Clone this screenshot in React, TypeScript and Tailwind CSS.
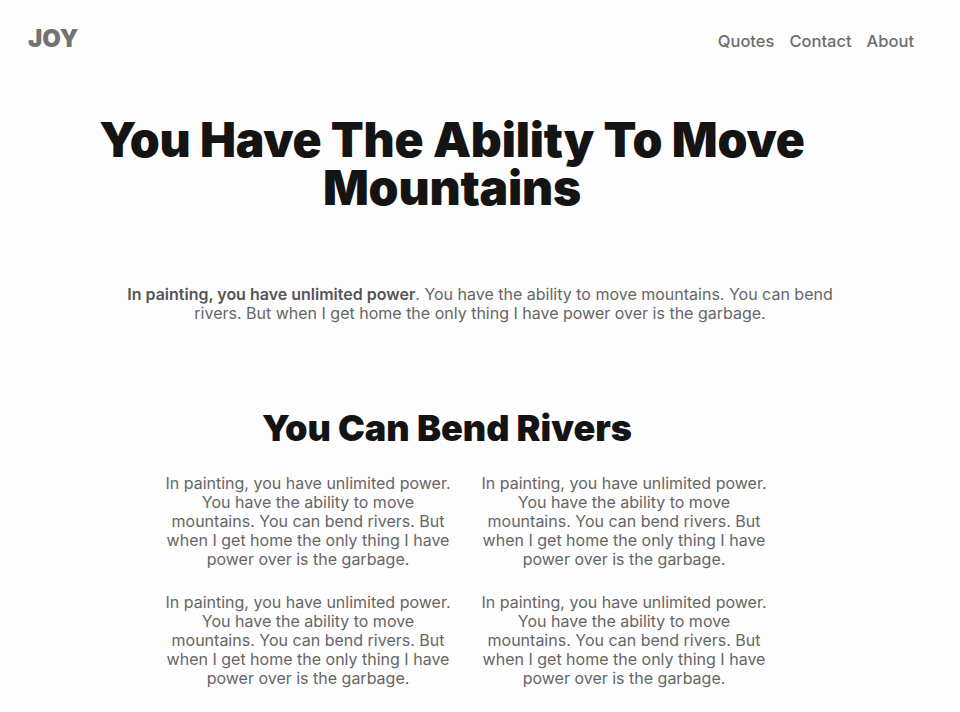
import React from 'react';

const blurb =
  'In painting, you have unlimited power. You have the ability to move mountains. You can bend rivers. But when I get home the only thing I have power over is the garbage.';

const App: React.FC = () => {
  const cards = [1, 2, 3, 4];

  return (
    <div className="min-h-[712px] bg-[#fdfdfd] font-['Inter',sans-serif] pb-10">
      {/* Header */}
      <header className="h-20 flex items-center justify-between pl-7 pr-[46px]">
        <a className="text-[24px] font-black text-[#727272] -mt-[2px]">JOY</a>
        <nav className="flex items-center gap-[15px] text-[16.5px] font-medium text-[#6e6e6e] mt-[2px]">
          <a>Quotes</a>
          <a>Contact</a>
          <a>About</a>
        </nav>
      </header>

      {/* Hero */}
      <div className="mt-9 pr-14">
        <h1 className="mx-auto max-w-[800px] text-center text-5xl leading-[48px] font-black tracking-[-0.004em] text-[#141414]">
          You Have The Ability To Move Mountains
        </h1>
      </div>

      <p className="mt-[73px] mx-auto max-w-[720px] text-center text-base leading-[19px] text-[#666666]">
        <strong className="font-semibold text-[#555555]">In painting, you have unlimited power</strong>. You have the
        ability to move mountains. You can bend rivers. But when I get home the only thing I have power over is the
        garbage.
      </p>

      {/* Section */}
      <div className="mt-[85px] pr-[66px]">
        <h2 className="text-center text-4xl leading-10 font-black text-[#141414]">
          You Can Bend Rivers
        </h2>
      </div>

      <div className="mt-[26px] pr-7 grid grid-cols-[300px_300px] justify-center gap-x-4 gap-y-6">
        {cards.map((c) => (
          <p key={c} className="text-center text-base leading-[19px] text-[#666666]">
            {blurb}
          </p>
        ))}
      </div>
    </div>
  );
};

export default App;
